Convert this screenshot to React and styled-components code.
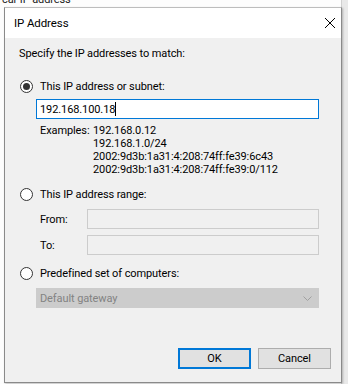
import React from "react";
import styled, { createGlobalStyle } from "styled-components";

const GlobalStyle = createGlobalStyle`
  html, body {
    margin: 0;
    padding: 0;
    background: #ffffff;
  }
  body {
    font-family: "Segoe UI", Roboto, "Noto Sans", sans-serif;
    font-size: 11px;
    line-height: 15px;
    letter-spacing: -0.1px;
    color: #000;
  }
`;

const Screen = styled.div`
  position: relative;
  width: 348px;
  height: 384px;
  overflow: hidden;
  background: #fdfdfd;
`;

const BehindText = styled.div`
  position: absolute;
  top: -8px;
  left: 2px;
  color: #222;
`;

const BehindEdge = styled.div`
  position: absolute;
  top: 0;
  right: 0;
  width: 6px;
  height: 384px;
  background: #e9e9e9;
  border-left: 1px solid #d0d0d0;
`;

const Dialog = styled.div`
  position: absolute;
  top: 7px;
  left: 4px;
  width: 336px;
  height: 374px;
  border: 1px solid #8a8a8a;
  border-top-color: #bdbdbd;
  background: #f0f0f0;
  display: flex;
  flex-direction: column;
  box-shadow: 1px 1px 2px rgba(0, 0, 0, 0.25);
`;

const TitleBar = styled.div`
  height: 30px;
  background: #fff;
  display: flex;
  align-items: center;
  justify-content: space-between;
  padding: 0 5px 0 9px;
  font-size: 11.5px;
`;

const Body = styled.div`
  flex: 1;
  display: flex;
  flex-direction: column;
  padding: 8px 22px 0 14px;
`;

const Intro = styled.div`
  margin-bottom: 17px;
`;

const RadioRow = styled.label`
  display: flex;
  align-items: center;
  gap: 7px;
  margin-left: 1px;
  height: 16px;
`;

const RadioCircle = styled.span`
  width: 11px;
  height: 11px;
  border: 1px solid #333;
  border-radius: 50%;
  background: #fff;
  display: flex;
  align-items: center;
  justify-content: center;
  &::after {
    content: "";
    width: 7px;
    height: 7px;
    border-radius: 50%;
    background: ${(p) => (p.$checked ? "#333" : "transparent")};
  }
`;

const Indented = styled.div`
  margin-left: 17px;
  margin-top: ${(p) => p.$gap || 7}px;
`;

const TextInput = styled.div`
  height: 18px;
  border: 1px solid ${(p) => (p.$disabled ? "#cccccc" : "#0078d7")};
  background: ${(p) => (p.$disabled ? "#f0f0f0" : "#fff")};
  display: flex;
  align-items: center;
  padding-left: 3px;
  flex: 1;
`;

const Caret = styled.span`
  width: 1px;
  height: 14px;
  background: #000;
`;

const Examples = styled.div`
  display: grid;
  grid-template-columns: 53px 1fr;
  line-height: 13px;
  margin: 5px 0 0 4px;
`;

const FieldRow = styled.div`
  display: flex;
  align-items: center;
  margin-left: 4px;
  margin-top: ${(p) => p.$gap || 0}px;
`;

const FieldLabel = styled.span`
  width: 47px;
`;

const Select = styled.div`
  height: 20px;
  background: #cccccc;
  color: #838383;
  display: flex;
  align-items: center;
  justify-content: space-between;
  padding: 0 7px 0 4px;
`;

const Section = styled.div`
  margin-top: ${(p) => p.$gap || 0}px;
`;

const Footer = styled.div`
  display: flex;
  justify-content: flex-end;
  gap: 7px;
  padding: 0 10px 13px 0;
  margin-top: auto;
`;

const Button = styled.div`
  width: 71px;
  height: 19px;
  display: flex;
  align-items: center;
  justify-content: center;
  background: #e1e1e1;
  border: 1px solid ${(p) => (p.$default ? "#0078d7" : "#adadad")};
  box-shadow: ${(p) => (p.$default ? "inset 0 0 0 1px #0078d7" : "none")};
`;

const Close = () => (
  <svg width="12" height="12" viewBox="0 0 12 12">
    <path d="M1 1 L11 11 M11 1 L1 11" stroke="#000" strokeWidth="1" />
  </svg>
);

const Chevron = () => (
  <svg width="9" height="5" viewBox="0 0 9 5">
    <path d="M0.5 0.5 L4.5 4.5 L8.5 0.5" stroke="#a0a0a0" fill="none" />
  </svg>
);

export default function App() {
  return (
    <Screen>
      <GlobalStyle />
      <BehindText>car IP address</BehindText>
      <BehindEdge />
      <Dialog>
        <TitleBar>
          <span>IP Address</span>
          <Close />
        </TitleBar>
        <Body>
          <Intro>Specify the IP addresses to match:</Intro>

          <RadioRow>
            <RadioCircle $checked />
            This IP address or subnet:
          </RadioRow>
          <Indented $gap={5}>
            <TextInput>
              192.168.100.18
              <Caret />
            </TextInput>
            <Examples>
              <span>Examples:</span>
              <span>192.168.0.12</span>
              <span />
              <span>192.168.1.0/24</span>
              <span />
              <span>2002:9d3b:1a31:4:208:74ff:fe39:6c43</span>
              <span />
              <span>2002:9d3b:1a31:4:208:74ff:fe39:0/112</span>
            </Examples>
          </Indented>

          <Section $gap={10}>
            <RadioRow>
              <RadioCircle />
              This IP address range:
            </RadioRow>
          </Section>
          <Indented $gap={7}>
            <FieldRow>
              <FieldLabel>From:</FieldLabel>
              <TextInput $disabled />
            </FieldRow>
            <FieldRow $gap={6}>
              <FieldLabel>To:</FieldLabel>
              <TextInput $disabled />
            </FieldRow>
          </Indented>

          <Section $gap={10}>
            <RadioRow>
              <RadioCircle />
              Predefined set of computers:
            </RadioRow>
          </Section>
          <Indented $gap={7}>
            <Select>
              Default gateway
              <Chevron />
            </Select>
          </Indented>
        </Body>
        <Footer>
          <Button $default>OK</Button>
          <Button>Cancel</Button>
        </Footer>
      </Dialog>
    </Screen>
  );
}
